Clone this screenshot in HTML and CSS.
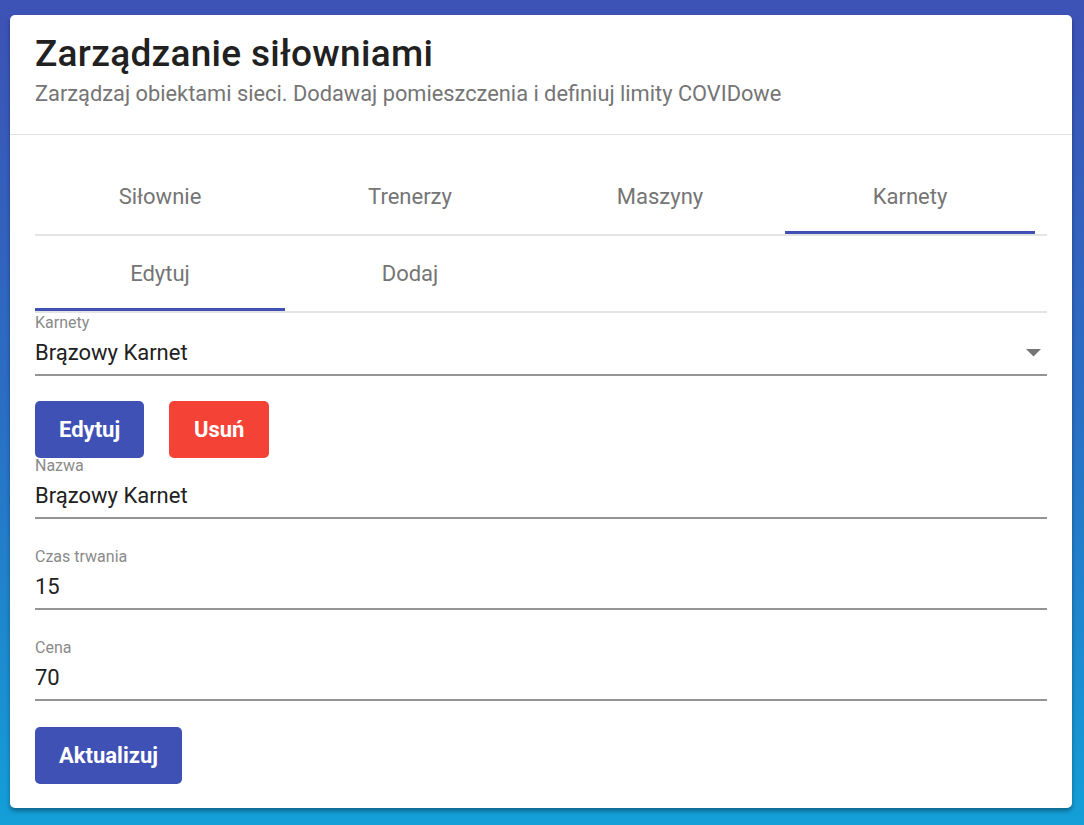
FILE: index.html
```html
<!DOCTYPE html>
<html lang="pl">
<head>
<meta charset="utf-8">
<title>Zarządzanie siłowniami</title>
<link rel="stylesheet" href="styles.css">
</head>
<body>
<div class="card">
  <header class="card-header">
    <h1 class="title">Zarządzanie siłowniami</h1>
    <p class="subtitle">Zarządzaj obiektami sieci. Dodawaj pomieszczenia i definiuj limity COVIDowe</p>
  </header>
  <main class="card-body">
    <nav class="tabs">
      <div class="tab">Siłownie</div>
      <div class="tab">Trenerzy</div>
      <div class="tab">Maszyny</div>
      <div class="tab active">Karnety</div>
    </nav>
    <nav class="tabs">
      <div class="tab active">Edytuj</div>
      <div class="tab">Dodaj</div>
    </nav>
    <div class="field select-field">
      <label class="field-label">Karnety</label>
      <div class="field-value">
        <span>Brązowy Karnet</span>
        <svg class="caret" width="15" height="8" viewBox="0 0 15 8"><path d="M0 0 L15 0 L7.5 7.5 Z" fill="#757575"/></svg>
      </div>
    </div>
    <div class="actions">
      <button class="btn btn-primary">Edytuj</button>
      <button class="btn btn-danger">Usuń</button>
    </div>
    <div class="field first">
      <label class="field-label">Nazwa</label>
      <div class="field-value">Brązowy Karnet</div>
    </div>
    <div class="field">
      <label class="field-label">Czas trwania</label>
      <div class="field-value">15</div>
    </div>
    <div class="field">
      <label class="field-label">Cena</label>
      <div class="field-value">70</div>
    </div>
    <div class="actions last">
      <button class="btn btn-primary">Aktualizuj</button>
    </div>
  </main>
</div>
</body>
</html>
```

FILE: styles.css
```css
* { box-sizing: border-box; }
html, body { height: 100%; }
body {
  margin: 0;
  font-family: Roboto, "Liberation Sans", sans-serif;
  background: linear-gradient(to bottom, #3d52b5 0%, #2a6fc4 50%, #139fd7 100%);
  overflow: hidden;
}
.card {
  margin: 15px 12px 0 10px;
  background: #fff;
  border-radius: 5px;
  box-shadow: 0 3px 4px rgba(0,0,0,0.35);
}
.card-header {
  padding: 18px 25px 28px;
  border-bottom: 1px solid #e0e0e0;
}
.title {
  margin: 0;
  font-size: 37px;
  line-height: 42px;
  font-weight: 500;
  letter-spacing: 0.3px;
  color: #212121;
}
.subtitle {
  margin: 7px 0 0;
  font-size: 21.8px;
  line-height: 24px;
  color: #757575;
}
.card-body {
  padding: 24px 25px 24px;
}
.tabs {
  display: flex;
  border-bottom: 2px solid #e4e4e4;
}
.tab {
  width: 250px;
  height: 75px;
  display: flex;
  align-items: center;
  justify-content: center;
  font-size: 22px;
  font-weight: 400;
  color: #757575;
  position: relative;
}
.tab.active::after {
  content: "";
  position: absolute;
  left: 0;
  right: 0;
  bottom: 0;
  height: 3px;
  background: #3f51b5;
}
.field {
  margin-top: 29px;
  border-bottom: 2px solid #949494;
}
.field.first { margin-top: -1px; }
.select-field { margin-top: 1px; }
.field-label {
  display: block;
  font-size: 16px;
  line-height: 18px;
  color: #8a8a8a;
}
.field-value {
  display: flex;
  align-items: center;
  justify-content: space-between;
  padding: 9px 0;
  font-size: 22px;
  line-height: 24px;
  color: #212121;
}
.caret { margin-right: 6px; }
.actions {
  display: flex;
  gap: 25px;
  margin-top: 25px;
}
.actions.last { margin-top: 26px; }
.btn {
  height: 57px;
  border: 0;
  border-radius: 5px;
  padding: 0 24px;
  font-family: inherit;
  font-size: 22px;
  font-weight: 700;
  color: #fff;
}
.btn-primary { background: #3f51b5; }
.btn-danger { background: #f44336; min-width: 100px; }
```
